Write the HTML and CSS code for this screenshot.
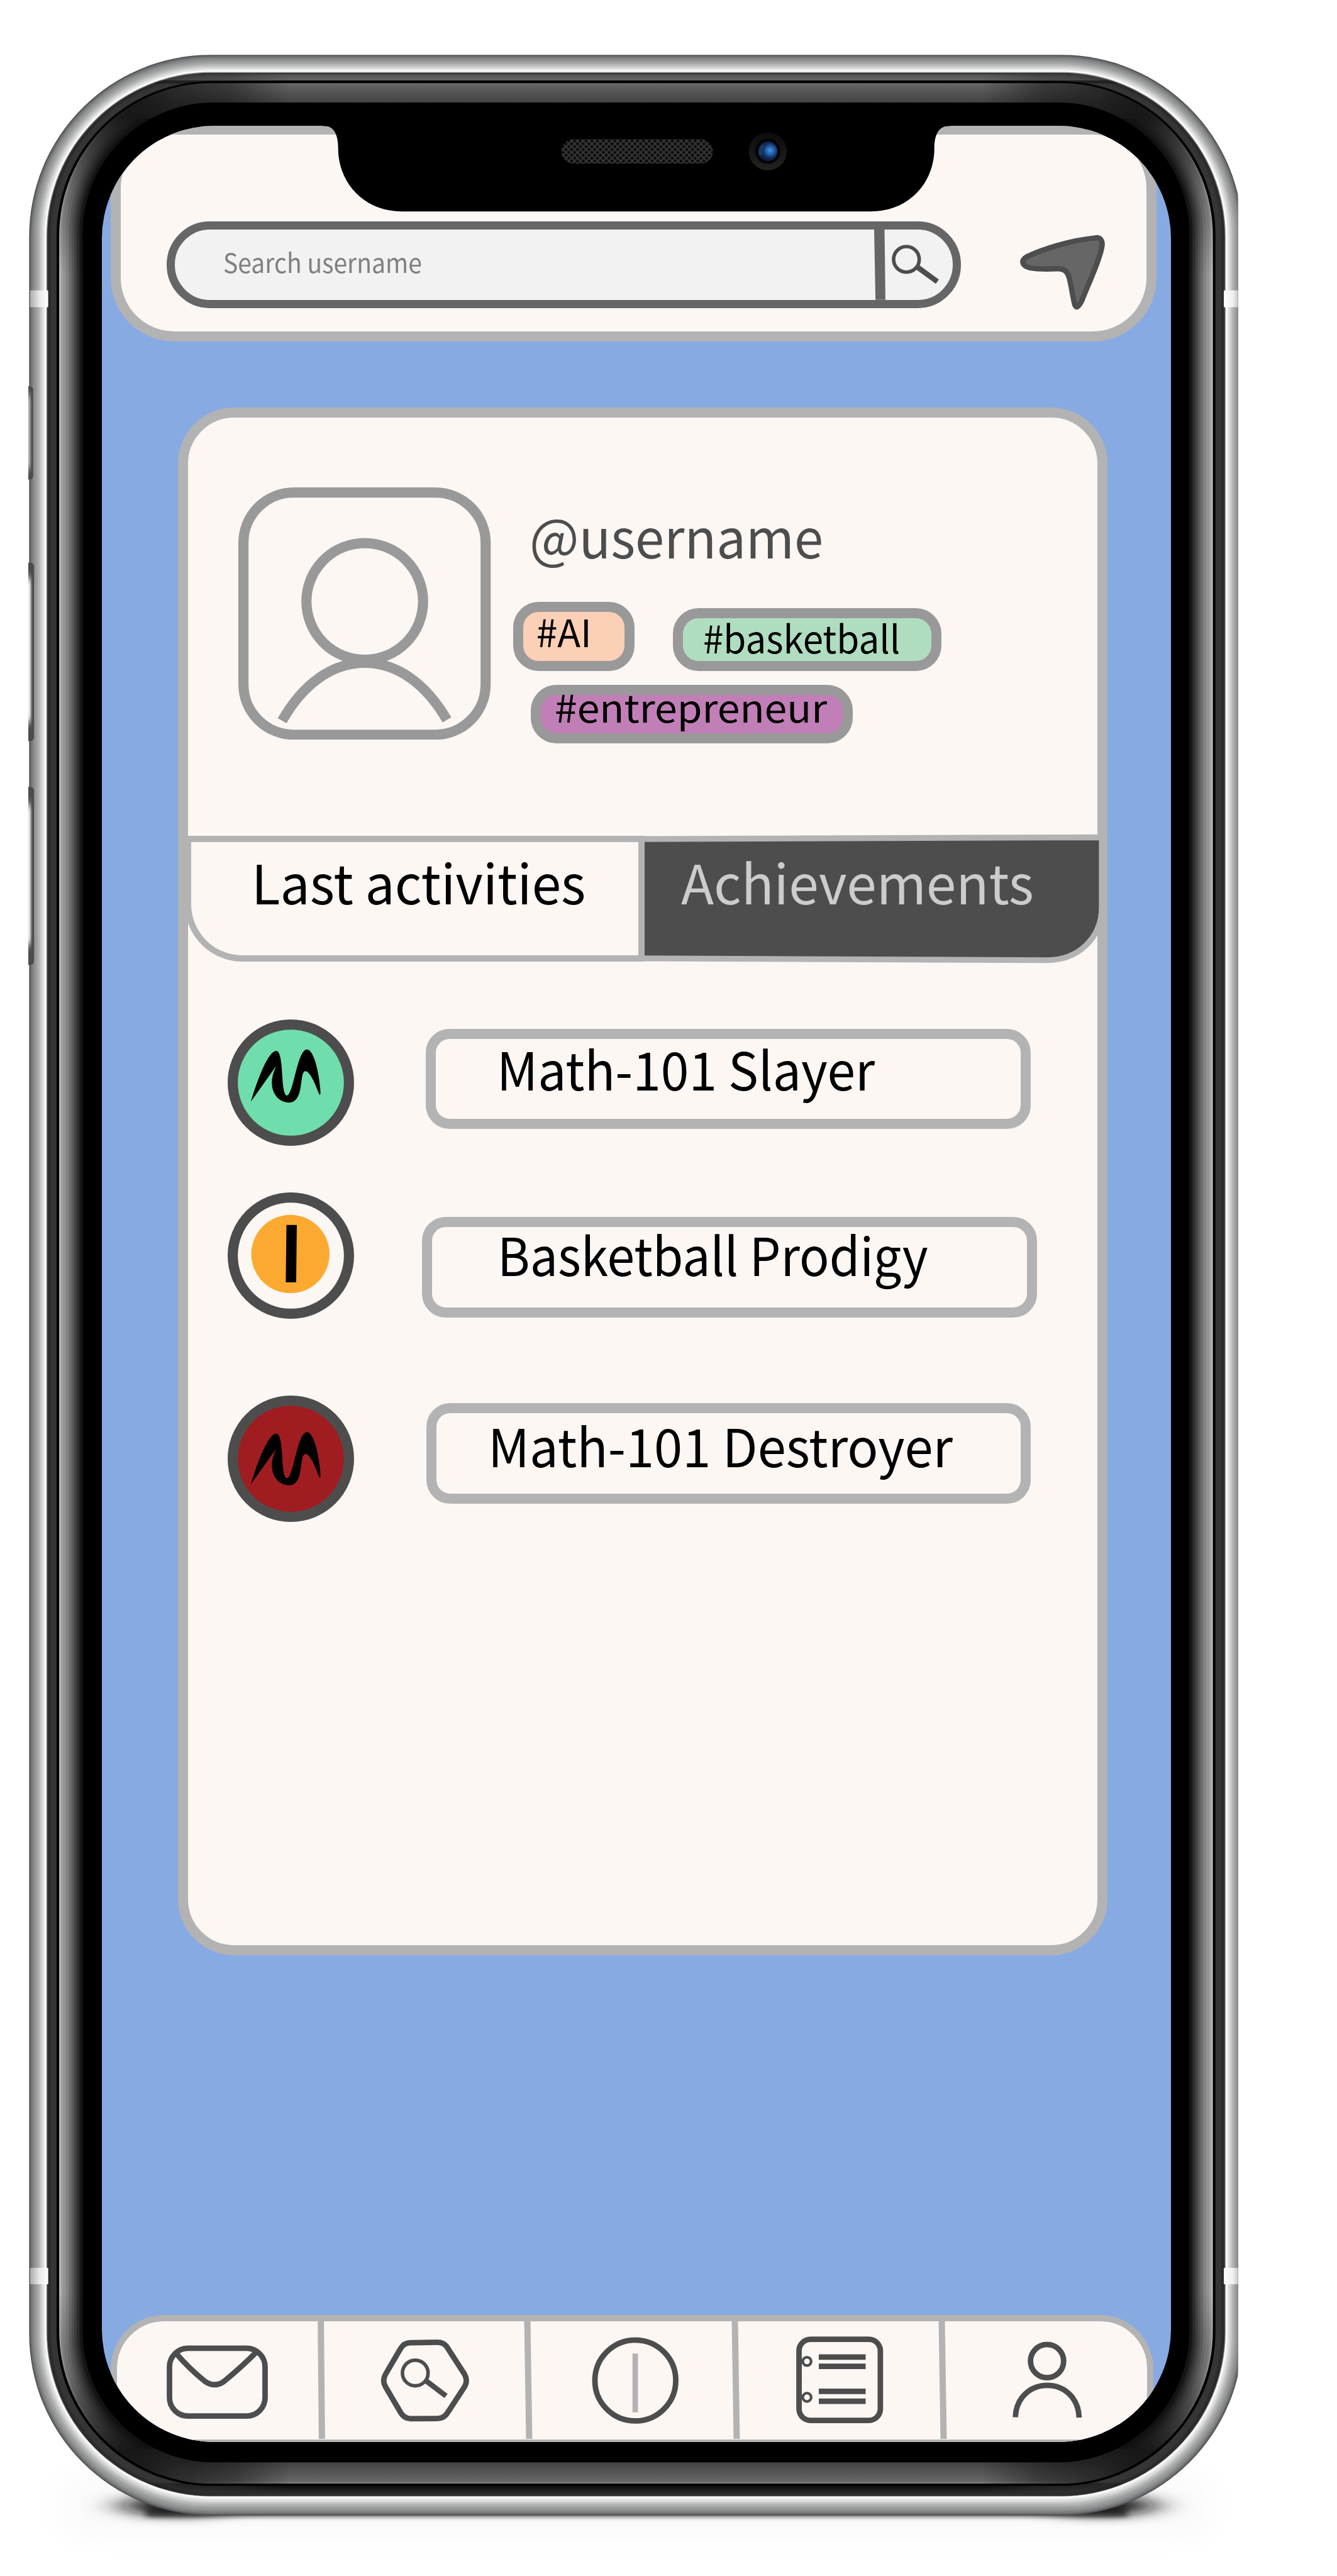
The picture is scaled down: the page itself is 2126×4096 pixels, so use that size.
FILE: index.html
```html
<!DOCTYPE html>
<html lang="en">
<head>
<meta charset="utf-8">
<title>Profile</title>
<link rel="stylesheet" href="styles.css">
</head>
<body>
<div class="stage">
  <svg class="frame" viewBox="0 0 3025 5828" aria-hidden="true">
    <defs>
      <clipPath id="edge"><rect x="64" y="0" width="2737" height="5828"/></clipPath>
      <filter id="soft" x="-80%" y="-150%" width="260%" height="400%"><feGaussianBlur stdDeviation="42 12"/></filter>
      <filter id="thin" x="-5%" y="-300%" width="110%" height="700%"><feGaussianBlur stdDeviation="8 5"/></filter>
      <filter id="wash" x="-10%" y="-40%" width="120%" height="180%"><feGaussianBlur stdDeviation="40 30"/></filter>
      <filter id="btn" x="-100%" y="-10%" width="300%" height="120%"><feGaussianBlur stdDeviation="2 9"/></filter>
      <linearGradient id="fadeY" gradientUnits="userSpaceOnUse" x1="0" y1="187" x2="0" y2="5619">
        <stop offset="0" stop-color="#000"/><stop offset=".014" stop-color="#111"/><stop offset=".045" stop-color="#aaa"/><stop offset=".08" stop-color="#fff"/>
        <stop offset=".92" stop-color="#fff"/><stop offset=".955" stop-color="#aaa"/><stop offset=".986" stop-color="#111"/><stop offset="1" stop-color="#000"/>
      </linearGradient>
      <linearGradient id="fadeX" gradientUnits="userSpaceOnUse" x1="133" y1="0" x2="2745" y2="0">
        <stop offset=".06" stop-color="#000"/><stop offset=".1" stop-color="#555"/><stop offset=".15" stop-color="#888"/><stop offset=".2" stop-color="#fff"/>
        <stop offset=".8" stop-color="#fff"/><stop offset=".85" stop-color="#888"/><stop offset=".9" stop-color="#555"/><stop offset=".94" stop-color="#000"/>
      </linearGradient>
      <linearGradient id="topBevel" gradientUnits="userSpaceOnUse" x1="0" y1="188" x2="0" y2="232">
        <stop offset="0" stop-color="#777"/><stop offset=".08" stop-color="#636363"/><stop offset="1" stop-color="#424242"/>
      </linearGradient>
      <linearGradient id="lowBevel" gradientUnits="userSpaceOnUse" x1="0" y1="5571" x2="0" y2="5619">
        <stop offset="0" stop-color="#424242"/><stop offset=".9" stop-color="#666"/><stop offset="1" stop-color="#858585"/>
      </linearGradient>
      <linearGradient id="topBand" gradientUnits="userSpaceOnUse" x1="0" y1="164" x2="0" y2="187">
        <stop offset="0" stop-color="#222"/><stop offset=".25" stop-color="#555"/><stop offset=".75" stop-color="#666"/><stop offset=".8" stop-color="#000"/>
      </linearGradient>
      <linearGradient id="lowBand" gradientUnits="userSpaceOnUse" x1="0" y1="5619" x2="0" y2="5646">
        <stop offset="0" stop-color="#000"/><stop offset=".5" stop-color="#1c1c1c"/><stop offset="1" stop-color="#363636"/>
      </linearGradient>
      <linearGradient id="antenna" x1="0" x2="1" y1="0" y2="0">
        <stop offset="0" stop-color="#aaa"/><stop offset=".5" stop-color="#e8e8e8"/><stop offset="1" stop-color="#fff"/>
      </linearGradient>
      <linearGradient id="antennaR" x1="0" x2="1" y1="0" y2="0">
        <stop offset="0" stop-color="#fff"/><stop offset=".5" stop-color="#f0f0f0"/><stop offset="1" stop-color="#aaa"/>
      </linearGradient>
      <mask id="mY" maskUnits="userSpaceOnUse" x="0" y="0" width="3025" height="5828"><rect width="3025" height="5828" fill="url(#fadeY)"/></mask>
      <mask id="mX" maskUnits="userSpaceOnUse" x="0" y="0" width="3025" height="5828"><rect width="3025" height="5828" fill="url(#fadeX)"/></mask>
      <clipPath id="bevelClip"><rect x="133" y="188" width="2612" height="5431" rx="344"/></clipPath>
      <clipPath id="bandClip"><rect x="107" y="165" width="2664" height="5482" rx="370"/></clipPath>
    </defs>
    <g clip-path="url(#edge)">
      <rect x="150" y="5600" width="2580" height="140" fill="#f9f9f9" filter="url(#wash)"/>
      <rect x="330" y="5674" width="2220" height="20" fill="#555" filter="url(#thin)"/>
      <ellipse cx="400" cy="5669" rx="125" ry="22" fill="#111" filter="url(#soft)"/>
      <ellipse cx="2490" cy="5669" rx="125" ry="22" fill="#111" filter="url(#soft)"/>
      <rect x="66" y="124" width="2746" height="5567" rx="411" fill="#4c4e50"/>
      <rect x="68" y="126" width="2742" height="5563" rx="409" fill="#66686a"/>
      <rect x="71" y="129" width="2736" height="5557" rx="406" fill="#7b7c7e"/>
      <rect x="75" y="133" width="2728" height="5549" rx="402" fill="#8c8d8e"/>
      <rect x="79" y="137" width="2720" height="5541" rx="398" fill="#989999"/>
      <rect x="83" y="141" width="2712" height="5532" rx="394" fill="#a5a6a5"/>
      <rect x="87" y="145" width="2704" height="5524" rx="390" fill="#b5b7b6"/>
      <rect x="91" y="149" width="2696" height="5515" rx="386" fill="#c8cac9"/>
      <rect x="95" y="153" width="2688" height="5507" rx="382" fill="#dbdddc"/>
      <rect x="99" y="157" width="2680" height="5498" rx="378" fill="#eee"/>
      <rect x="102" y="160" width="2674" height="5491" rx="375" fill="#fff"/>
      <rect x="105" y="163" width="2668" height="5485" rx="372" fill="#888"/>
      <rect x="107" y="165" width="2664" height="5482" rx="370" fill="#2b2b2a"/>
      <rect x="115" y="172" width="2648" height="5468" rx="362" fill="#353535"/>
      <g clip-path="url(#bandClip)" mask="url(#mX)">
        <rect x="107" y="165" width="2664" height="24" fill="url(#topBand)"/>
        <rect x="107" y="5618" width="2664" height="29" fill="url(#lowBand)"/>
      </g>
      <rect x="128" y="184" width="2622" height="5440" rx="349" fill="#000"/>
      <rect x="134" y="188" width="2610" height="5431" rx="344" fill="#111"/>
      <g mask="url(#mY)">
        <rect x="134" y="188" width="2610" height="5431" rx="344" fill="#c4c4c4"/>
        <rect x="137" y="191" width="2604" height="5425" rx="341" fill="#a3a3a3"/>
        <rect x="142" y="195" width="2594" height="5417" rx="336" fill="#939493"/>
        <rect x="149" y="201" width="2580" height="5405" rx="330" fill="#828382"/>
        <rect x="156" y="207" width="2566" height="5393" rx="323" fill="#6d6d6d"/>
        <rect x="162" y="212" width="2554" height="5382" rx="318" fill="#595959"/>
        <rect x="168" y="217" width="2542" height="5372" rx="312" fill="#434343"/>
        <rect x="174" y="222" width="2530" height="5362" rx="306" fill="#2e2e2e"/>
        <rect x="180" y="227" width="2518" height="5352" rx="300" fill="#171717"/>
      </g>
      <g clip-path="url(#bevelClip)" mask="url(#mX)">
        <rect x="133" y="188" width="2612" height="80" fill="url(#topBevel)"/>
        <rect x="133" y="5540" width="2612" height="79" fill="url(#lowBevel)"/>
      </g>
      <rect x="187" y="232" width="2504" height="5339" rx="296" fill="#000"/>
      <g fill="url(#antenna)"><rect x="68" y="657" width="41" height="38"/><rect x="68" y="5131" width="41" height="37"/></g>
      <g fill="url(#antennaR)"><rect x="2769" y="657" width="41" height="38"/><rect x="2769" y="5131" width="41" height="37"/></g>
      <g fill="#4b4d4d">
        <rect x="50" y="874" width="25" height="211" rx="8"/><rect x="50" y="1273" width="27" height="404" rx="9"/><rect x="50" y="1780" width="27" height="403" rx="9"/>
      </g>
      <g filter="url(#btn)"><rect x="50" y="893" width="19" height="168" fill="#b4b7b5"/><rect x="50" y="1308" width="20" height="325" fill="#eee"/><rect x="50" y="1820" width="20" height="316" fill="#e6e6e6"/></g>
    </g>
  </svg>

  <main class="screen">
    <header class="header">
      <div class="search">
        <span class="search-text"><span class="t t-search">Search username</span></span>
        <svg class="search-icon" viewBox="1978 519 178 159">
          <path d="M1978 519H2001.500L2003.500 678H1981Z" fill="#666"/>
          <circle cx="2051" cy="586.500" r="29" class="line8"/>
          <path d="M2076 604L2121 637" class="line12"/>
        </svg>
      </div>
      <svg class="send" viewBox="2300 525 206 182">
        <path d="M2479 538C2488 537 2493 543 2493 554C2490 582 2462 642 2447 680Q2436 702 2431 690C2426 670 2424 650 2418 627Q2412 607 2393 608C2370 609 2345 609 2330 606C2311 601 2308 590 2322 581C2360 563 2420 544 2479 538Z"/>
      </svg>
    </header>

    <section class="card">
      <div class="profile">
        <svg class="avatar" viewBox="540 1103 571 571">
          <rect x="551.500" y="1114.500" width="548" height="548" rx="114"/>
          <circle cx="826" cy="1361" r="132"/>
          <path d="M639 1631C685 1550 750 1500 826 1500S966 1550 1012 1629"/>
        </svg>
        <div class="info">
          <div class="username"><span class="t t-user">@username</span></div>
          <div class="tags">
            <span class="tag tag-ai"><span class="t t-ai">#AI</span></span>
            <span class="tag tag-basketball"><span class="t t-bask">#basketball</span></span>
            <span class="tag tag-entrepreneur"><span class="t t-ent">#entrepreneur</span></span>
          </div>
        </div>
      </div>

      <nav class="tabs">
        <div class="tab tab-last"><span class="t t-last">Last activities</span></div>
        <div class="tab tab-ach">
          <svg class="tab-shape" viewBox="1452 1885 1050 296"><path d="M1440 1898L2493.500 1894V2052C2493.500 2122 2440 2172 2370 2172L1440 2168Z"/></svg>
          <span class="t t-ach">Achievements</span>
        </div>
      </nav>

      <ul class="list">
        <li class="row">
          <svg class="badge" viewBox="515 2306 286 286">
            <circle cx="658" cy="2449" r="131.500" fill="#70deac" class="ring"/>
            <path d="M567.500 2492C583 2440 607 2377 625 2377C634 2377 637 2402 638.500 2432C640 2460 643 2478 649 2478C664 2478 672 2374 694.500 2374C712 2374 724 2440 725 2472Q724.500 2480 722 2475C714 2455 702 2423 691 2423C676 2423 690 2494 654 2494C632 2494 615 2475 615 2449C615 2435 620 2422 625 2411Z"/>
          </svg>
          <div class="box box-1"><span class="t t-b1">Math-101 Slayer</span></div>
        </li>
        <li class="row">
          <svg class="badge" viewBox="515 2697.500 286 286">
            <circle cx="658" cy="2840.500" r="131.500" fill="none" class="ring"/>
            <circle cx="657" cy="2837" r="88.500" fill="#fba930"/>
            <path d="M648 2771H671.500L670 2901H646.500Z"/>
          </svg>
          <div class="box box-2"><span class="t t-b2">Basketball Prodigy</span></div>
        </li>
        <li class="row">
          <svg class="badge" viewBox="515 3156 286 286">
            <circle cx="658" cy="3299" r="131.500" fill="#9f1d21" class="ring"/>
            <path transform="translate(0 865)" d="M567.500 2492C583 2440 607 2377 625 2377C634 2377 637 2402 638.500 2432C640 2460 643 2478 649 2478C664 2478 672 2374 694.500 2374C712 2374 724 2440 725 2472Q724.500 2480 722 2475C714 2455 702 2423 691 2423C676 2423 690 2494 654 2494C632 2494 615 2475 615 2449C615 2435 620 2422 625 2411Z"/>
          </svg>
          <div class="box box-3"><span class="t t-b3">Math-101 Destroyer</span></div>
        </li>
      </ul>
    </section>

    <nav class="bar">
      <svg viewBox="265 5253 456.500 266">
        <rect x="384.250" y="5313.750" width="217" height="154" rx="42"/>
        <path d="M398 5324Q430 5361 465 5389Q487 5404 508 5389Q545 5359 582 5322"/>
      </svg>
      <i class="sep sep-first"></i>
      <svg viewBox="735.500 5253 454 266">
        <path d="M930 5301.500L990 5300.500Q1006 5300 1014 5314L1052 5373Q1060 5387 1052 5401L1014 5459Q1006 5473 990 5473L930 5473.500Q915 5473 907 5459L873 5401Q865 5387 873 5373L907 5315Q915 5301 930 5301.500Z"/>
        <circle cx="940.400" cy="5370" r="29" class="line8"/>
        <path d="M964 5387L1010 5422" class="line12"/>
      </svg>
      <i class="sep"></i>
      <svg viewBox="1203.500 5253 455 266">
        <circle cx="1438.700" cy="5387" r="91.500"/>
        <path d="M1438.500 5326V5459" class="coin"/>
      </svg>
      <i class="sep"></i>
      <svg viewBox="1672.500 5253 454.500 266">
        <rect x="1808.250" y="5293.750" width="184" height="183.500" rx="26"/>
        <circle cx="1826.200" cy="5343.700" r="9.500" class="hole"/>
        <circle cx="1826.200" cy="5425" r="9.500" class="hole"/>
        <path d="M1853 5334H1959M1853 5355H1959M1853 5411.500H1959M1853 5434H1959"/>
      </svg>
      <i class="sep"></i>
      <svg viewBox="2141 5253 454 266">
        <circle cx="2369.600" cy="5343" r="37.500"/>
        <path d="M2298 5470C2299 5428 2330 5398 2370 5398S2441 5428 2442 5471"/>
      </svg>
    </nav>
  </main>

  <svg class="notch" viewBox="700 270 1480 220" aria-hidden="true">
    <defs>
      <pattern id="mesh" width="13" height="13" patternUnits="userSpaceOnUse"><path d="M0 0L13 13M13 0L0 13" stroke="#393939" stroke-width="2.600"/></pattern>
      <radialGradient id="lens" cx=".62" cy=".46" r=".6"><stop offset="0" stop-color="#3f97ea"/><stop offset=".3" stop-color="#2668b4"/><stop offset=".6" stop-color="#132f5c"/><stop offset="1" stop-color="#0a1730"/></radialGradient>
      <linearGradient id="rim" x1="0" y1="0" x2="0" y2="1"><stop offset="0" stop-color="#0b0b0b"/><stop offset="1" stop-color="#222"/></linearGradient>
      <radialGradient id="well"><stop offset=".8" stop-color="#000"/><stop offset="1" stop-color="#000" stop-opacity="0"/></radialGradient>
    </defs>
    <path d="M730 270V285H735C754 285 765 302 765 335C765 415 825 478 909 478H1970C2055 478 2114 415 2114 335C2114 302 2126 285 2145 285H2150V270Z"/>
    <rect x="1270" y="315" width="343" height="55" rx="27.500" fill="#0c0c0c"/>
    <rect x="1270" y="315" width="343" height="55" rx="27.500" fill="url(#mesh)"/>
    <circle cx="1737" cy="342" r="43" fill="url(#rim)"/>
    <circle cx="1737" cy="342" r="31" fill="url(#well)"/>
    <circle cx="1737" cy="342" r="22.500" fill="url(#lens)"/>
    <path d="M1728 325Q1715 332 1717 350L1724 352Z" fill="#1d3a66"/>
  </svg>
</div>
</body>
</html>
```
FILE: styles.css
```css
/* 1rem = 100 design units */
html { font-size: 70.281px; }
body { margin: 0; background: #fff; font-family: "Noto Sans CJK SC", "Noto Sans", sans-serif; }
.stage { position: relative; display: flex; align-items: flex-start; width: 30.25rem; height: 58.28rem; overflow: hidden; }
.frame { position: absolute; inset: 0; width: 100%; height: 100%; }
.notch { position: absolute; left: 7rem; top: 2.7rem; width: 14.8rem; height: 2.2rem; }
svg { display: block; }

.screen {
  position: relative;
  box-sizing: border-box;
  width: 24.2rem;
  height: 52.4rem;
  margin: 2.85rem 0 0 2.3rem;
  border-radius: 2.55rem;
  background: #88aae2;
  overflow: hidden;
  display: flex;
  flex-direction: column;
}

/* labels: each is condensed or widened to its drawn width */
.t { display: inline-block; white-space: pre; line-height: 1; transform-origin: 0 50%; }
.t-search { transform: scaleX(.927); }
.t-user { transform: scaleX(.97); }
.t-bask { transform: scaleX(.965); }
.t-ent { transform: scaleX(1.064); }
.t-last { transform: scaleX(.97); }
.t-ach { transform: scaleX(.99); }
.t-b1 { transform: scaleX(.961); }
.t-b2 { transform: scaleX(.94); }
.t-b3 { transform: scaleX(.973); }

.header {
  box-sizing: border-box;
  flex: none;
  display: flex;
  align-items: flex-start;
  width: 23.66rem;
  height: 4.92rem;
  margin: -.04rem 0 0 .2rem;
  padding: 1.97rem 0 0 1.04rem;
  border: .23rem solid #b3b3b3;
  border-radius: 1.44rem;
  background: #fdf7f4;
}
.search {
  box-sizing: border-box;
  display: flex;
  width: 17.97rem;
  height: 1.96rem;
  border: .185rem solid #666;
  border-radius: .98rem;
  background: #f2f2f2;
  overflow: hidden;
}
.search-text { flex: 1; padding: .43rem 0 0 1.1rem; font-size: .6rem; line-height: 1; color: #808080; }
.search-icon { flex: none; width: 1.78rem; height: 1.59rem; }
.send { width: 2.06rem; height: 1.82rem; margin: .24rem 0 0 1.27rem; }
.send path { fill: #666; stroke: #4d4d4d; stroke-width: 12; stroke-linejoin: round; }
.line8, .line12 { fill: none; stroke: #4d4d4d; }
.line8 { stroke-width: 8; }
.line12 { stroke-width: 12; }

.card {
  box-sizing: border-box;
  flex: none;
  width: 21.02rem;
  height: 35.02rem;
  margin: 1.49rem 0 0 1.73rem;
  border: .23rem solid #b3b3b3;
  border-radius: 1.27rem;
  background: #fdf7f4;
}
.profile { box-sizing: border-box; display: flex; height: 9.46rem; padding: 1.58rem 0 0 1.14rem; }
.avatar { flex: none; width: 5.71rem; height: 5.71rem; fill: none; stroke: #999; stroke-width: 23; }
.info { margin-left: .5rem; padding-top: .48rem; }
.username { height: 2.11rem; padding-left: .37rem; font-size: 1.22rem; line-height: 1; color: #4d4d4d; }
.tags { display: grid; grid-template-columns: 3.62rem auto; grid-template-rows: 1.88rem auto; align-items: start; justify-items: start; }
.tag { box-sizing: border-box; display: flex; align-items: flex-start; border: .23rem solid #999; border-radius: .58rem; font-size: .86rem; line-height: 1; color: #000; }
.tag-ai { width: 2.75rem; height: 1.56rem; background: #fcd0b7; padding-left: .3rem; }
.tag-basketball { width: 6.07rem; height: 1.43rem; margin-top: .14rem; background: #b0ddc0; padding-left: .45rem; }
.tag-entrepreneur { grid-column: 1 / 3; width: 7.29rem; height: 1.32rem; margin-left: .4rem; background: #c17fb7; padding-left: .31rem; }
.t-ent { margin-top: -.18rem; }

.tabs { display: flex; margin-left: -.08rem; height: 2.85rem; width: 20.84rem; }
.tab { box-sizing: border-box; font-size: 1.23rem; line-height: 1; }
.tab-last { position: relative; z-index: 1; width: 10.4rem; border: .145rem solid #b3b3b3; border-bottom-left-radius: 1.3rem; background: #fdf7f4; padding: .27rem 0 0 1.375rem; }
.tab-ach { position: relative; width: 10.44rem; padding: .41rem 0 0 .83rem; color: #ccc; }
.tab-ach .t { position: relative; }
.tab-shape { position: absolute; left: -.06rem; top: -.06rem; width: 10.5rem; height: 2.96rem; }
.tab-shape path { fill: #4d4d4d; stroke: #b3b3b3; stroke-width: 13; }

.list { list-style: none; margin: 0; padding: 1.31rem 0 0 .89rem; }
.row { display: flex; align-items: flex-start; height: 2.86rem; }
.row + .row { margin-top: 1.055rem; }
.row + .row + .row { margin-top: 1.725rem; }
.badge { flex: none; width: 2.86rem; height: 2.86rem; }
.ring { stroke: #4d4d4d; stroke-width: 23; }
.box { box-sizing: border-box; height: 2.27rem; border: .23rem solid #b3b3b3; border-radius: .54rem; font-size: 1.19rem; line-height: 1; }
.box-1 { width: 13.68rem; margin: .21rem 0 0 1.63rem; padding: .06rem 0 0 1.37rem; }
.box-2 { width: 13.92rem; margin: .55rem 0 0 1.54rem; padding: 0 0 0 1.48rem; }
.box-3 { width: 13.67rem; margin: .18rem 0 0 1.64rem; padding: .11rem 0 0 1.16rem; }

.bar {
  box-sizing: border-box;
  flex: none;
  display: flex;
  width: 23.59rem;
  height: 2.95rem;
  margin: 8.14rem 0 0 .206rem;
  border: .145rem solid #b3b3b3;
  border-radius: 1.21rem;
  background: #fdf7f4;
}
.bar svg { flex: 1 1 0; min-width: 0; height: 2.66rem; fill: none; stroke: #4d4d4d; stroke-width: 12.5; }
.bar .line8 { stroke-width: 8; }
.bar .line12 { stroke-width: 12; }
.bar .hole { stroke-width: 6; }
.bar .coin { stroke: #b3b3b3; }
.sep { flex: none; width: .14rem; background: #b3b3b3; transform: skewX(.9deg); }
.sep-first { transform: skewX(.55deg); }
```
